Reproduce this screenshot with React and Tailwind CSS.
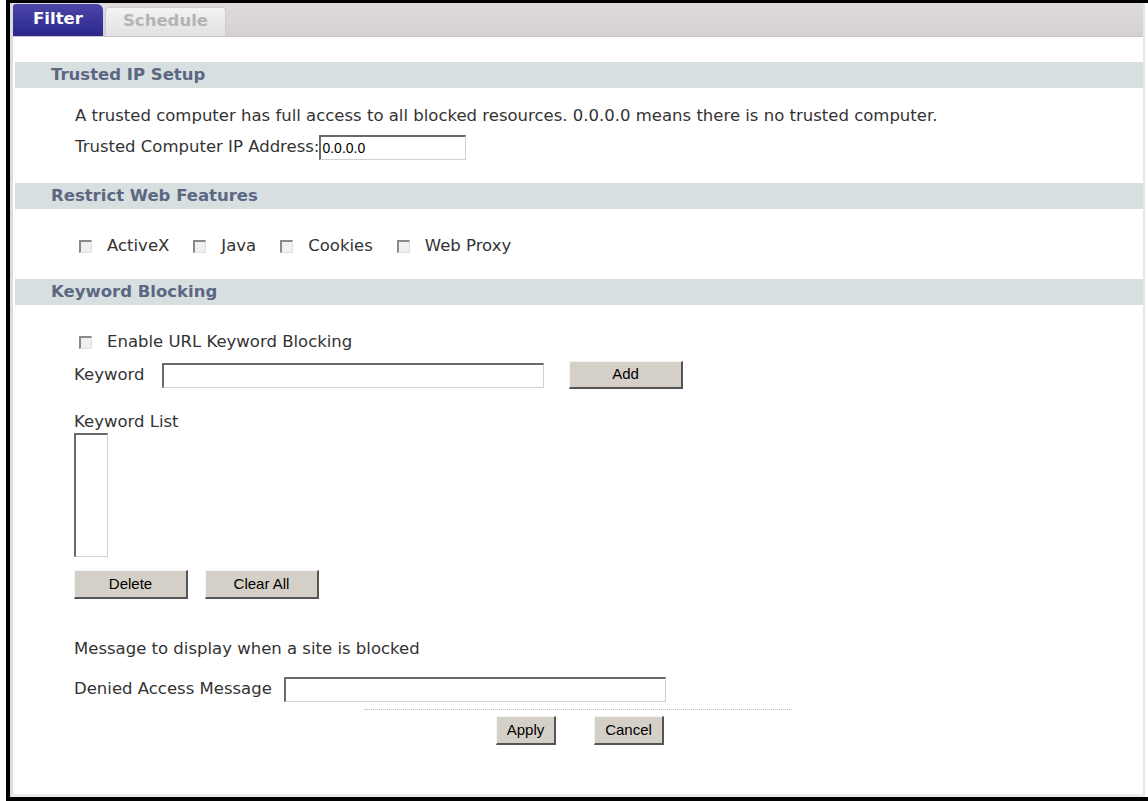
import { useState } from 'react';

function SectionHeader({ children }) {
  return (
    <div className="h-[26px] bg-[#d8dfe1] flex items-center pl-[36px] text-[16.5px] font-bold text-[#5c6882]">
      {children}
    </div>
  );
}

function Box({ checked, onChange }) {
  return (
    <span
      onClick={onChange}
      className="inline-block w-[13px] h-[13px] bg-[#f0f0f0] border-t-2 border-l-2 border-[#8a8a8a] border-r border-b border-r-[#e0e0e0] border-b-[#e0e0e0] shrink-0 relative"
    >
      {checked && <span className="absolute inset-0 text-[10px] leading-[10px] text-black text-center">✓</span>}
    </span>
  );
}

function WinButton({ children, className = '' }) {
  return (
    <button
      className={`bg-[#d4d0c8] border-t border-l border-t-[#f4f4f4] border-l-[#f4f4f4] border-r-2 border-b-2 border-r-[#555] border-b-[#555] text-[15px] text-black font-['Liberation_Sans',Arial,sans-serif] ${className}`}
    >
      {children}
    </button>
  );
}

function TextInput({ className = '', defaultValue = '' }) {
  return (
    <input
      type="text"
      defaultValue={defaultValue}
      className={`bg-white border-t-2 border-l-2 border-t-[#6a6a6a] border-l-[#6a6a6a] border-r border-b border-r-[#d4d0c8] border-b-[#d4d0c8] outline-none px-[1px] text-[14px] text-black font-['Liberation_Sans',Arial,sans-serif] ${className}`}
    />
  );
}

export default function App() {
  const [features, setFeatures] = useState({ ActiveX: false, Java: false, Cookies: false, 'Web Proxy': false });
  const [urlBlock, setUrlBlock] = useState(false);

  return (
    <div className="w-[1148px] h-[801px] bg-white font-['DejaVu_Sans',Verdana,sans-serif]">
      <div className="ml-[6px] h-full border-l-[4px] border-t-[3px] border-b-[4px] border-black flex flex-col">
        <div className="flex-1 flex flex-col border-l-[3px] border-l-[#dcdcdc] border-b-[3px] border-b-[#ececec] mr-[3px] border-r-[2px] border-r-[#e6e6e6] text-[#333]">
          {/* Tabs */}
          <div className="h-[34px] bg-[linear-gradient(#dedade,#d4d0d4)] border-b border-[#c8c4c8] flex items-end">
            <div className="w-[90px] h-[32px] rounded-tr-[6px] rounded-tl-[3px] bg-[linear-gradient(#4b46a8,#2b268a)] text-white font-bold text-[16.5px] flex justify-center pt-[3px]">
              Filter
            </div>
            <div className="ml-[2px] w-[121px] h-[29px] rounded-t-[4px] bg-[linear-gradient(#f4f3f4,#e2e0e2)] border border-[#cfcccf] border-b-0 text-[#b4b4b4] font-bold text-[16.5px] flex justify-center pt-[1px]">
              Schedule
            </div>
          </div>

          <div className="pt-[25px] pl-[2px]">
            <SectionHeader>Trusted IP Setup</SectionHeader>
            <div className="pl-[60px] pt-[16px] text-[16.5px]">
              <div className="h-[24px] leading-[24px]">
                A trusted computer has full access to all blocked resources. 0.0.0.0 means there is no trusted computer.
              </div>
              <div className="mt-[7px] flex items-center h-[25px]">
                <span>Trusted Computer IP Address:</span>
                <TextInput defaultValue="0.0.0.0" className="w-[147px] h-[25px]" />
              </div>
            </div>

            <div className="mt-[23px]">
              <SectionHeader>Restrict Web Features</SectionHeader>
            </div>
            <div className="pl-[64px] pt-[28px] h-[70px] flex items-start text-[16.5px]">
              {Object.keys(features).map(k => (
                <label key={k} className="flex items-center mr-[24px] h-[18px]">
                  <Box checked={features[k]} onChange={() => setFeatures(f => ({ ...f, [k]: !f[k] }))} />
                  <span className="ml-[15px]">{k}</span>
                </label>
              ))}
            </div>

            <SectionHeader>Keyword Blocking</SectionHeader>
            <div className="pl-[59px] pt-[26px] text-[16.5px]">
              <label className="flex items-center h-[22px] pl-[5px]">
                <Box checked={urlBlock} onChange={() => setUrlBlock(v => !v)} />
                <span className="ml-[15px]">Enable URL Keyword Blocking</span>
              </label>
              <div className="mt-[8px] flex items-center h-[28px]">
                <span className="w-[88px]">Keyword</span>
                <TextInput className="w-[382px] h-[25px]" />
                <WinButton className="ml-[25px] w-[114px] h-[28px]">Add</WinButton>
              </div>
              <div className="mt-[22px] h-[22px] leading-[22px]">Keyword List</div>
              <div className="w-[34px] h-[124px] bg-white border-t-2 border-l-2 border-t-[#6a6a6a] border-l-[#6a6a6a] border-r border-b border-r-[#d4d0c8] border-b-[#d4d0c8]" />
              <div className="mt-[13px] flex">
                <WinButton className="w-[114px] h-[29px]">Delete</WinButton>
                <WinButton className="ml-[17px] w-[114px] h-[29px]">Clear All</WinButton>
              </div>
              <div className="mt-[39px] h-[22px] leading-[22px]">Message to display when a site is blocked</div>
              <div className="mt-[17px] flex items-center h-[25px]">
                <span className="w-[210px]">Denied Access Message</span>
                <TextInput className="w-[382px] h-[25px]" />
              </div>
            </div>

            <div className="mt-[7px] ml-[349px] w-[428px] border-t border-dotted border-[#b8b8b8]" />
            <div className="mt-[6px] flex pl-[481px]">
              <WinButton className="w-[60px] h-[29px]">Apply</WinButton>
              <WinButton className="ml-[38px] w-[70px] h-[29px]">Cancel</WinButton>
            </div>
          </div>
        </div>
      </div>
    </div>
  );
}
